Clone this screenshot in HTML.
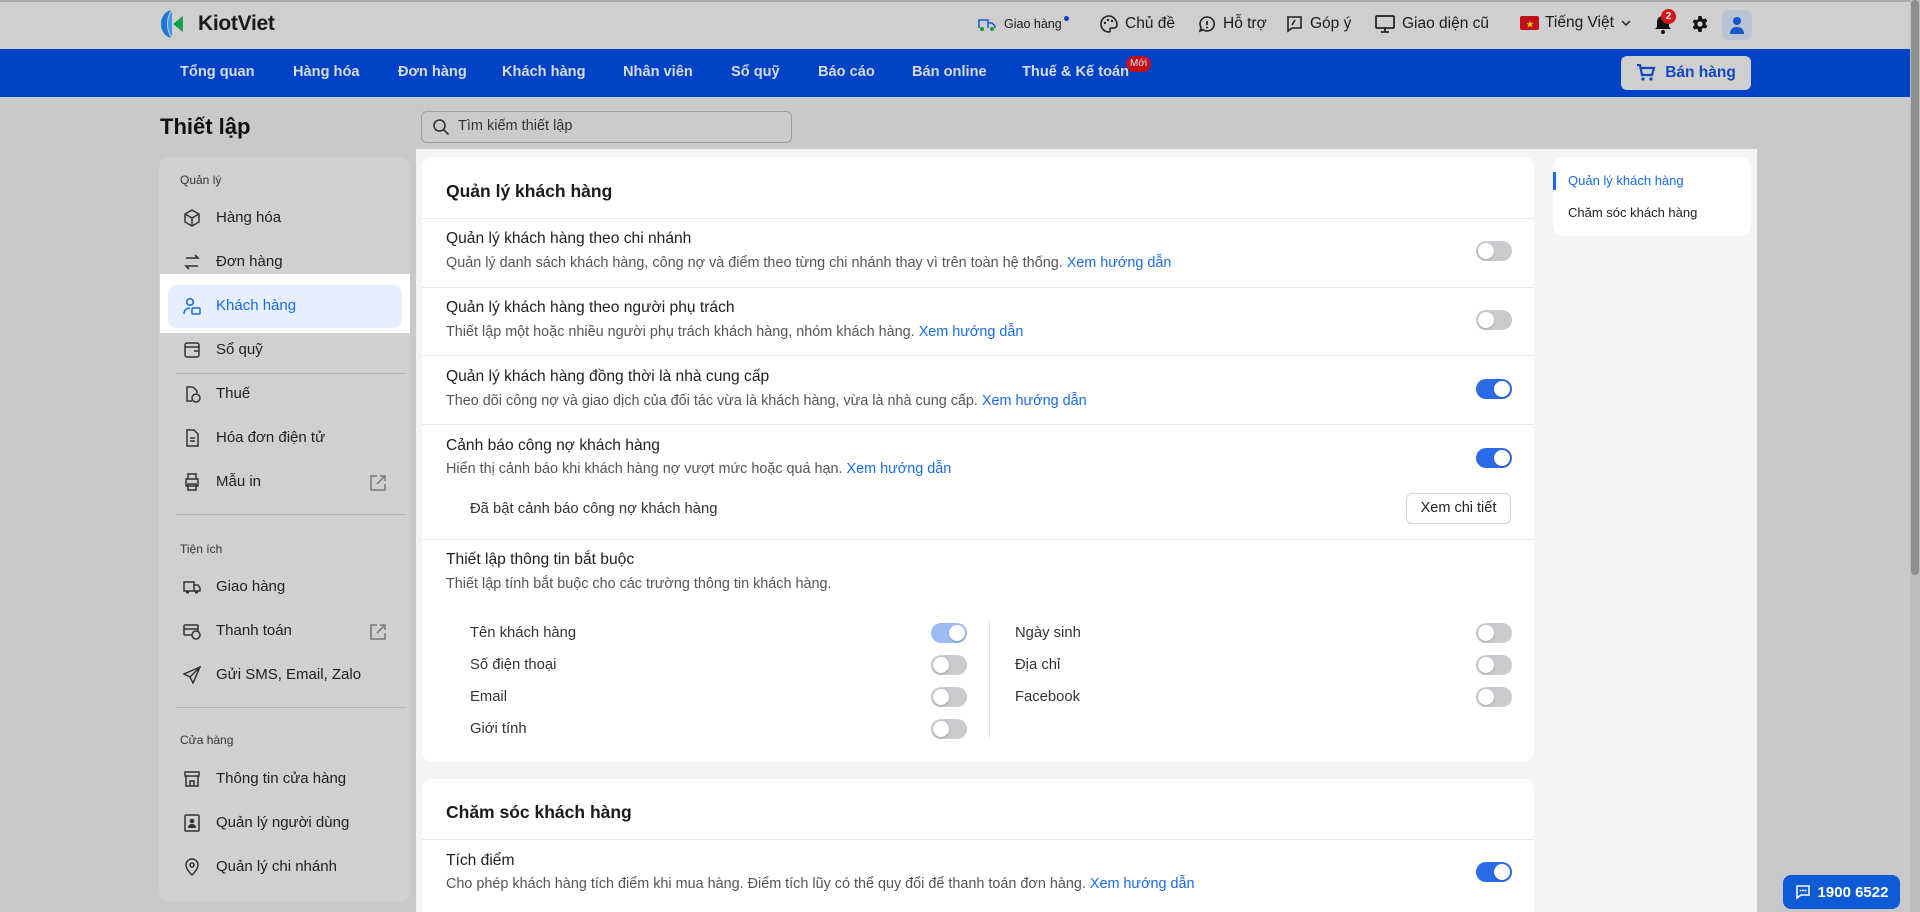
<!DOCTYPE html>
<html><head><meta charset="utf-8">
<style>
*{box-sizing:border-box;margin:0;padding:0}
html,body{width:1920px;height:912px;overflow:hidden}
body{background:#c8c9cb;font-family:"Liberation Sans","Noto Sans CJK SC",sans-serif;color:#1f1f1f;position:relative}
.a{position:absolute;white-space:nowrap}
#top{position:absolute;left:0;top:0;width:1920px;height:49px;background:#cfcfcf;border-top:2px solid #a9a9a9}
#nav{position:absolute;left:0;top:49px;width:1920px;height:48px;background:#0042c6}
.nv{position:absolute;top:64px;color:#d7dce6;font-size:14.6px;font-weight:bold}
.tb{position:absolute;top:14px;font-size:15.5px;color:#1b1b1b;display:flex;align-items:center;gap:6px}
#side{position:absolute;left:159px;top:157px;width:251px;height:745px;background:#d0d0d0;border-radius:10px}
.si{position:absolute;left:216px;font-size:15px;color:#1f1f1f}
.sic{position:absolute;left:183px;width:18px;height:18px}
.sl{position:absolute;left:180px;font-size:12px;color:#333}
.sd{position:absolute;left:176px;width:230px;height:1px;background:#b6b6b6}
#main{position:absolute;left:416px;top:149px;width:1341px;height:763px;background:#f3f4f6}
.card{position:absolute;background:#fff;border-radius:10px}
.t{position:absolute;left:446px;font-size:15.6px;color:#1f1f1f}
.d{position:absolute;left:446px;font-size:14.4px;color:#555}
.d b{color:#1a6ae6;font-weight:normal}
.hr{position:absolute;left:422px;width:1112px;height:1px;background:#e7e8ea}
.tg{position:absolute;width:36px;height:20px;border-radius:10px;background:#c9cbcf}
.tg::after{content:"";position:absolute;top:2px;left:2px;width:16px;height:16px;border-radius:50%;background:#fff;box-shadow:0 1px 2px rgba(0,0,0,.2)}
.tg.on{background:#2c6be6}.tg.on::after{left:18px}
.tg.lt{background:#9dbdf2}.tg.lt::after{left:18px}
.g{position:absolute;font-size:14.8px;color:#333}
</style></head><body>
<div id="top"></div>
<svg class="a" style="left:159px;top:9px" width="36" height="30" viewBox="0 0 36 30"><path d="M12 1C5 3 2 9 2 15s3 12 10 14C9 24 8 19 8 15s1-9 4-14z" fill="#1b76d6"/><path d="M13 2c-3 4-4 9-4 13s1 9 4 13z" fill="#3b9bf0"/><path d="M24 7v16l-10-8z" fill="#0aa34a"/></svg>
<div class="a" style="left:198px;top:12px;font-size:21px;font-weight:bold;color:#1a1a1a;letter-spacing:-.3px">KiotViet</div>
<div class="tb" style="left:976px"><svg width="22" height="20" viewBox="0 0 22 20"><path d="M3 14V6h9v8M12 9h4l3 3v2" fill="none" stroke="#1a5fd0" stroke-width="1.6"/><circle cx="6" cy="15" r="2" fill="#1b9a3e"/><circle cx="16" cy="15" r="2" fill="#1b9a3e"/></svg><span style="font-size:12.5px">Giao hàng</span><span style="width:5px;height:5px;border-radius:50%;background:#0b3fc0;margin:-12px 0 0 -4px"></span></div>
<div class="tb" style="left:1099px"><svg width="20" height="20" viewBox="0 0 20 20"><path d="M10 2a8 8 0 1 0 0 16c1 0 1.5-1 1-2s0-2 1.5-2H15a3 3 0 0 0 3-3c0-5-4-9-8-9z" fill="none" stroke="#222" stroke-width="1.6"/><circle cx="6" cy="9" r="1.2" fill="#222"/><circle cx="9" cy="6" r="1.2" fill="#222"/><circle cx="13" cy="7" r="1.2" fill="#222"/></svg>Chủ đề</div>
<div class="tb" style="left:1197px"><svg width="20" height="20" viewBox="0 0 20 20"><path d="M10 3a7 7 0 1 1-4 12.6L3 17l1-3.5A7 7 0 0 1 10 3z" fill="none" stroke="#222" stroke-width="1.6"/><path d="M10 7v4" stroke="#222" stroke-width="1.8"/><circle cx="10" cy="13.5" r="1" fill="#222"/></svg>Hỗ trợ</div>
<div class="tb" style="left:1284px"><svg width="20" height="20" viewBox="0 0 20 20"><path d="M3 3h14v11H8l-4 3V3z" fill="none" stroke="#222" stroke-width="1.6"/><path d="M11 6l-3 5" stroke="#222" stroke-width="1.6"/></svg>Góp ý</div>
<div class="tb" style="left:1374px"><svg width="22" height="20" viewBox="0 0 22 20"><rect x="2" y="2" width="18" height="12" rx="1" fill="none" stroke="#222" stroke-width="1.8"/><path d="M7 18h8M11 14v4" stroke="#222" stroke-width="1.8"/></svg>Giao diện cũ</div>
<div class="tb" style="left:1520px"><span style="width:19px;height:14px;background:#c0101a;border-radius:2px;display:inline-block;position:relative"><span style="position:absolute;left:6px;top:3px;color:#f2d200;font-size:8px">★</span></span>Tiếng Việt<svg width="12" height="10"><path d="M2 3l4 4 4-4" fill="none" stroke="#222" stroke-width="1.5"/></svg></div>
<svg class="a" style="left:1654px;top:13px" width="18" height="22" viewBox="0 0 18 22"><path d="M9 3c-4 0-6 3-6 6v5l-2 2h16l-2-2V9c0-3-2-6-6-6z" fill="#111"/><circle cx="9" cy="19" r="2" fill="#111"/></svg>
<div class="a" style="left:1661px;top:9px;width:15px;height:15px;border-radius:50%;background:#d8141a;color:#fff;font-size:10px;text-align:center;line-height:15px;font-weight:bold">2</div>
<svg class="a" style="left:1691px;top:15px" width="18" height="18" viewBox="0 0 18 18"><path d="M7.5 1h3l.5 2.3 1.6.9 2.2-.8 1.5 2.6-1.7 1.6v1.8l1.7 1.6-1.5 2.6-2.2-.8-1.6.9L10.5 17h-3L7 14.7l-1.6-.9-2.2.8-1.5-2.6L3.4 10.4V8.6L1.7 7 3.2 4.4l2.2.8L7 4.3z" fill="#111"/><circle cx="9" cy="9" r="2.6" fill="#cfcfcf"/></svg>
<div class="a" style="left:1722px;top:10px;width:30px;height:30px;border-radius:7px;background:#b8c4d4"></div>
<svg class="a" style="left:1729px;top:15px" width="16" height="20" viewBox="0 0 16 20"><circle cx="8" cy="6" r="4" fill="#1656c8"/><path d="M1 19c0-5 3-7 7-7s7 2 7 7z" fill="#1656c8"/></svg>

<div id="nav"></div>
<div class="nv" style="left:180px">Tổng quan</div>
<div class="nv" style="left:293px">Hàng hóa</div>
<div class="nv" style="left:398px">Đơn hàng</div>
<div class="nv" style="left:502px">Khách hàng</div>
<div class="nv" style="left:623px">Nhân viên</div>
<div class="nv" style="left:731px">Sổ quỹ</div>
<div class="nv" style="left:818px">Báo cáo</div>
<div class="nv" style="left:912px">Bán online</div>
<div class="nv" style="left:1022px">Thuế &amp; Kế toán</div>
<div class="a" style="left:1126px;top:56px;height:16px;padding:0 4px;border-radius:8px;background:#c0111a;color:#e8e8e8;font-size:10px;line-height:16px">Mới</div>
<div class="a" style="left:1621px;top:56px;width:130px;height:34px;border-radius:6px;background:#cfcfcf;display:flex;align-items:center;justify-content:center;gap:9px;color:#0f47c0;font-weight:bold;font-size:15.5px"><svg width="20" height="18" viewBox="0 0 20 18"><path d="M1 1h3l2 10h10l2-7H5" fill="none" stroke="#0f47c0" stroke-width="2.2"/><circle cx="7" cy="15" r="1.6" fill="#0f47c0"/><circle cx="15" cy="15" r="1.6" fill="#0f47c0"/></svg>Bán hàng</div>

<div class="a" style="left:160px;top:114px;font-size:22px;font-weight:bold;color:#111">Thiết lập</div>
<div class="a" style="left:421px;top:111px;width:371px;height:32px;border:1px solid #9c9c9c;border-radius:6px;background:#cbcbcb"></div>
<svg class="a" style="left:432px;top:118px" width="18" height="18" viewBox="0 0 18 18"><circle cx="7.5" cy="7.5" r="5.5" fill="none" stroke="#333" stroke-width="1.6"/><path d="M11.5 11.5l5 5" stroke="#333" stroke-width="1.6"/></svg>
<div class="a" style="left:458px;top:118px;font-size:14.5px;color:#333">Tìm kiếm thiết lập</div>

<div id="side"></div>
<div class="sl" style="top:173px">Quản lý</div>
<svg class="sic" style="top:209px" viewBox="0 0 18 18"><path d="M9 1l7 4v8l-7 4-7-4V5zM2 5l7 4 7-4M9 9v8" fill="none" stroke="#333" stroke-width="1.5"/></svg>
<div class="si" style="top:209px">Hàng hóa</div>
<svg class="sic" style="top:253px" viewBox="0 0 18 18"><path d="M3 5h12l-3-3M15 13H3l3 3" fill="none" stroke="#333" stroke-width="1.6"/></svg>
<div class="si" style="top:253px">Đơn hàng</div>
<div class="a" style="left:160px;top:274px;width:250px;height:59px;background:#fff"></div>
<div class="a" style="left:168px;top:285px;width:234px;height:43px;background:#e5effd;border-radius:9px"></div>
<svg class="sic" style="top:297px" viewBox="0 0 18 18"><circle cx="7" cy="5" r="3.3" fill="none" stroke="#1a6ae6" stroke-width="1.5"/><path d="M1 17c0-4 2.5-6 6-6" fill="none" stroke="#1a6ae6" stroke-width="1.5"/><rect x="9" y="11" width="8" height="6" rx="1" fill="none" stroke="#1a6ae6" stroke-width="1.5"/></svg>
<div class="si" style="top:297px;color:#1a6ae6">Khách hàng</div>
<svg class="sic" style="top:341px" viewBox="0 0 18 18"><rect x="2" y="2" width="14" height="14" rx="2" fill="none" stroke="#333" stroke-width="1.5"/><path d="M2 6h14M11 10h5" stroke="#333" stroke-width="1.5"/></svg>
<div class="si" style="top:341px">Sổ quỹ</div>
<div class="sd" style="top:373px"></div>
<svg class="sic" style="top:385px" viewBox="0 0 18 18"><path d="M10 2H4v14h5M10 2l4 4v2" fill="none" stroke="#333" stroke-width="1.5"/><circle cx="13" cy="13" r="4" fill="none" stroke="#333" stroke-width="1.5"/></svg>
<div class="si" style="top:385px">Thuế</div>
<svg class="sic" style="top:429px" viewBox="0 0 18 18"><path d="M4 1h7l4 4v12H4z M7 9h5M7 12h5" fill="none" stroke="#333" stroke-width="1.5"/></svg>
<div class="si" style="top:429px">Hóa đơn điện tử</div>
<svg class="sic" style="top:473px" viewBox="0 0 18 18"><path d="M5 6V1h8v5M3 6h12v7H3zM5 11h8v6H5z" fill="none" stroke="#333" stroke-width="1.5"/></svg>
<div class="si" style="top:473px">Mẫu in</div>
<svg class="a" style="left:369px;top:474px" width="18" height="18" viewBox="0 0 18 18"><path d="M8 2H2v14h14v-6M11 2h5v5M16 2l-8 8" fill="none" stroke="#777" stroke-width="1.5"/></svg>
<div class="sd" style="top:514px"></div>
<div class="sl" style="top:542px">Tiện ích</div>
<svg class="sic" style="top:578px" viewBox="0 0 18 18"><path d="M1 4h10v9H1zM11 7h4l2 3v3h-6" fill="none" stroke="#333" stroke-width="1.5"/><circle cx="4.5" cy="14" r="1.6" fill="#333"/><circle cx="13.5" cy="14" r="1.6" fill="#333"/></svg>
<div class="si" style="top:578px">Giao hàng</div>
<svg class="sic" style="top:622px" viewBox="0 0 18 18"><rect x="1" y="3" width="14" height="10" rx="1" fill="none" stroke="#333" stroke-width="1.5"/><path d="M1 7h14" stroke="#333" stroke-width="1.5"/><circle cx="13" cy="13" r="4" fill="#d0d0d0" stroke="#333" stroke-width="1.5"/></svg>
<div class="si" style="top:622px">Thanh toán</div>
<svg class="a" style="left:369px;top:623px" width="18" height="18" viewBox="0 0 18 18"><path d="M8 2H2v14h14v-6M11 2h5v5M16 2l-8 8" fill="none" stroke="#777" stroke-width="1.5"/></svg>
<svg class="sic" style="top:666px" viewBox="0 0 18 18"><path d="M17 1L1 8l6 3 3 6zM7 11l10-10" fill="none" stroke="#333" stroke-width="1.5"/></svg>
<div class="si" style="top:666px">Gửi SMS, Email, Zalo</div>
<div class="sd" style="top:707px"></div>
<div class="sl" style="top:733px">Cửa hàng</div>
<svg class="sic" style="top:770px" viewBox="0 0 18 18"><path d="M2 2h14v4H2zM3 6v10h12V6M7 16v-5h4v5" fill="none" stroke="#333" stroke-width="1.5"/></svg>
<div class="si" style="top:770px">Thông tin cửa hàng</div>
<svg class="sic" style="top:814px" viewBox="0 0 18 18"><rect x="2" y="1" width="14" height="16" rx="1" fill="none" stroke="#333" stroke-width="1.5"/><circle cx="9" cy="7" r="2.3" fill="#333"/><path d="M5 14c0-3 2-4 4-4s4 1 4 4z" fill="#333"/></svg>
<div class="si" style="top:814px">Quản lý người dùng</div>
<svg class="sic" style="top:858px" viewBox="0 0 18 18"><path d="M9 17s6-5.5 6-10A6 6 0 0 0 3 7c0 4.5 6 10 6 10z" fill="none" stroke="#333" stroke-width="1.5"/><circle cx="9" cy="7" r="2" fill="none" stroke="#333" stroke-width="1.5"/></svg>
<div class="si" style="top:858px">Quản lý chi nhánh</div>

<div id="main"></div>
<div class="card" style="left:422px;top:157px;width:1112px;height:605px"></div>
<div class="card" style="left:422px;top:779px;width:1112px;height:133px;border-radius:10px 10px 0 0"></div>
<div class="card" style="left:1553px;top:157px;width:198px;height:79px"></div>
<div class="a" style="left:1553px;top:172px;width:3px;height:18px;background:#1a6ae6"></div>
<div class="a" style="left:1568px;top:173px;font-size:13px;color:#1a6ae6">Quản lý khách hàng</div>
<div class="a" style="left:1568px;top:205px;font-size:13px;color:#222">Chăm sóc khách hàng</div>

<div class="t" style="top:181px;font-size:17.5px;font-weight:bold;color:#1a1a1a">Quản lý khách hàng</div>
<div class="hr" style="top:218px"></div>
<div class="t" style="top:230px">Quản lý khách hàng theo chi nhánh</div>
<div class="d" style="top:255px">Quản lý danh sách khách hàng, công nợ và điểm theo từng chi nhánh thay vì trên toàn hệ thống. <b>Xem hướng dẫn</b></div>
<div class="tg" style="left:1476px;top:241px"></div>
<div class="hr" style="top:287px"></div>
<div class="t" style="top:299px">Quản lý khách hàng theo người phụ trách</div>
<div class="d" style="top:324px">Thiết lập một hoặc nhiều người phụ trách khách hàng, nhóm khách hàng. <b>Xem hướng dẫn</b></div>
<div class="tg" style="left:1476px;top:310px"></div>
<div class="hr" style="top:355px"></div>
<div class="t" style="top:368px">Quản lý khách hàng đồng thời là nhà cung cấp</div>
<div class="d" style="top:393px">Theo dõi công nợ và giao dịch của đối tác vừa là khách hàng, vừa là nhà cung cấp. <b>Xem hướng dẫn</b></div>
<div class="tg on" style="left:1476px;top:379px"></div>
<div class="hr" style="top:424px"></div>
<div class="t" style="top:437px">Cảnh báo công nợ khách hàng</div>
<div class="d" style="top:461px">Hiển thị cảnh báo khi khách hàng nợ vượt mức hoặc quá hạn. <b>Xem hướng dẫn</b></div>
<div class="tg on" style="left:1476px;top:448px"></div>
<div class="g" style="left:470px;top:501px;color:#333">Đã bật cảnh báo công nợ khách hàng</div>
<div class="a" style="left:1406px;top:493px;width:105px;height:31px;border:1px solid #d0d3d8;border-radius:6px;font-size:14.5px;color:#222;text-align:center;line-height:29px">Xem chi tiết</div>
<div class="hr" style="top:539px"></div>
<div class="t" style="top:551px">Thiết lập thông tin bắt buộc</div>
<div class="d" style="top:576px">Thiết lập tính bắt buộc cho các trường thông tin khách hàng.</div>
<div class="g" style="left:470px;top:625px">Tên khách hàng</div>
<div class="tg lt" style="left:931px;top:623px"></div>
<div class="g" style="left:470px;top:657px">Số điện thoại</div>
<div class="tg" style="left:931px;top:655px"></div>
<div class="g" style="left:470px;top:689px">Email</div>
<div class="tg" style="left:931px;top:687px"></div>
<div class="g" style="left:470px;top:721px">Giới tính</div>
<div class="tg" style="left:931px;top:719px"></div>
<div class="a" style="left:989px;top:621px;width:1px;height:117px;background:#e3e4e7"></div>
<div class="g" style="left:1015px;top:625px">Ngày sinh</div>
<div class="tg" style="left:1476px;top:623px"></div>
<div class="g" style="left:1015px;top:657px">Địa chỉ</div>
<div class="tg" style="left:1476px;top:655px"></div>
<div class="g" style="left:1015px;top:689px">Facebook</div>
<div class="tg" style="left:1476px;top:687px"></div>

<div class="t" style="top:802px;font-size:17.5px;font-weight:bold;color:#1a1a1a">Chăm sóc khách hàng</div>
<div class="hr" style="top:839px"></div>
<div class="t" style="top:852px">Tích điểm</div>
<div class="d" style="top:876px">Cho phép khách hàng tích điểm khi mua hàng. Điểm tích lũy có thể quy đổi để thanh toán đơn hàng. <b>Xem hướng dẫn</b></div>
<div class="tg on" style="left:1476px;top:862px"></div>

<div class="a" style="left:1910px;top:0;width:10px;height:912px;background:#bdbdbd"></div>
<div class="a" style="left:1911px;top:0;width:8px;height:575px;background:#8e8e8e;border-radius:4px"></div>
<div class="a" style="left:1783px;top:875px;width:117px;height:34px;border-radius:8px;background:#0f5bd6;color:#fff;font-weight:bold;font-size:15px;display:flex;align-items:center;justify-content:center;gap:7px"><svg width="16" height="16" viewBox="0 0 16 16"><path d="M2 2h12v9H6l-4 3z" fill="none" stroke="#fff" stroke-width="1.5"/><circle cx="5.5" cy="6.5" r="1" fill="#fff"/><circle cx="8" cy="6.5" r="1" fill="#fff"/><circle cx="10.5" cy="6.5" r="1" fill="#fff"/></svg>1900 6522</div>
</body></html>
